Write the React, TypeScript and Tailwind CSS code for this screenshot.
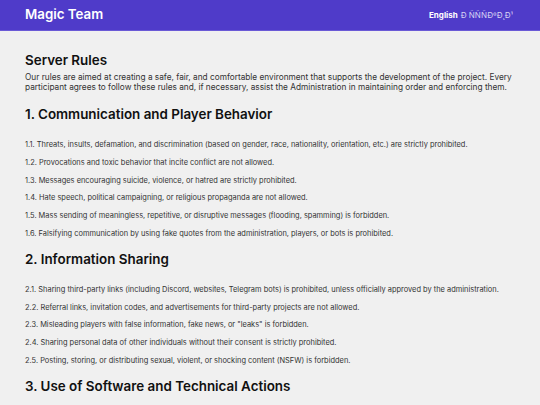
import React from "react";

const s1 = [
  "1.1. Threats, insults, defamation, and discrimination (based on gender, race, nationality, orientation, etc.) are strictly prohibited.",
  "1.2. Provocations and toxic behavior that incite conflict are not allowed.",
  "1.3. Messages encouraging suicide, violence, or hatred are strictly prohibited.",
  "1.4. Hate speech, political campaigning, or religious propaganda are not allowed.",
  "1.5. Mass sending of meaningless, repetitive, or disruptive messages (flooding, spamming) is forbidden.",
  "1.6. Falsifying communication by using fake quotes from the administration, players, or bots is prohibited.",
];
const s2 = [
  "2.1. Sharing third-party links (including Discord, websites, Telegram bots) is prohibited, unless officially approved by the administration.",
  "2.2. Referral links, invitation codes, and advertisements for third-party projects are not allowed.",
  "2.3. Misleading players with false information, fake news, or \"leaks\" is forbidden.",
  "2.4. Sharing personal data of other individuals without their consent is strictly prohibited.",
  "2.5. Posting, storing, or distributing sexual, violent, or shocking content (NSFW) is forbidden.",
];

export default function App() {
  return (
    <div className="w-[540px] h-[405px] overflow-hidden bg-[#f0f0f0] font-['Inter',sans-serif]">
      <header className="h-[31px] bg-[#4f3bc9] border-b border-[#6a5ad6] flex items-center justify-between pl-[25px] pr-[27px]">
        <div className="text-white text-[13.3px] font-semibold leading-none">Magic Team</div>
        <div className="flex items-center gap-[3px] text-[8px] leading-none">
          <span className="text-white font-bold">English</span>
          <span className="text-[#d8d3f3]">Ð ÑÑÑÐºÐ¸Ð¹</span>
        </div>
      </header>
      <main className="pl-[25px] pr-[25px]">
        <h1 className="mt-[19px] text-[13.4px] leading-[20px] font-semibold text-[#111]">Server Rules</h1>
        <p className="mt-[2px] text-[8.28px] leading-[10px] text-[#333]">
          Our rules are aimed at creating a safe, fair, and comfortable environment that supports the development of the project. Every participant agrees to follow these rules and, if necessary, assist the Administration in maintaining order and enforcing them.
        </p>
        <h2 className="mt-[12px] text-[13.4px] leading-[20px] font-semibold text-[#111]">1. Communication and Player Behavior</h2>
        <div className="mt-[12px] flex flex-col">
          {s1.map((t) => (
            <div key={t} className="text-[7.45px] leading-[17.8px] text-[#333] whitespace-nowrap">{t}</div>
          ))}
        </div>
        <h2 className="mt-[6px] text-[13.4px] leading-[20px] font-semibold text-[#111]">2. Information Sharing</h2>
        <div className="mt-[12px] flex flex-col">
          {s2.map((t) => (
            <div key={t} className="text-[7.45px] leading-[17.8px] text-[#333] whitespace-nowrap">{t}</div>
          ))}
        </div>
        <h2 className="mt-[6px] text-[13.4px] leading-[20px] font-semibold text-[#111]">3. Use of Software and Technical Actions</h2>
      </main>
    </div>
  );
}
